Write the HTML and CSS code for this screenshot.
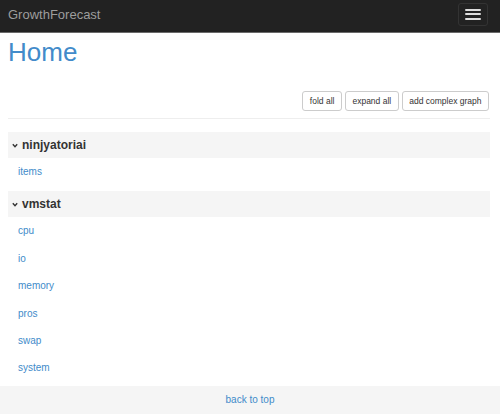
FILE: index.html
```html
<!DOCTYPE html>
<html lang="en">
<head>
  <meta charset="UTF-8">
  <title>GrowthForecast</title>
  <link rel="stylesheet" href="styles.css">
</head>
<body>

  <div class="navbar">
    <a class="brand" href="#">GrowthForecast</a>
    <button class="toggle">
      <span class="bar"></span>
      <span class="bar"></span>
      <span class="bar"></span>
    </button>
  </div>

  <div class="container">
    <h1>Home</h1>

    <div class="actions">
      <button class="btn">fold all</button>
      <button class="btn">expand all</button>
      <button class="btn">add complex graph</button>
    </div>
    <hr>

    <div class="service first">
      <div class="service-head">
        <svg class="chev" width="6" height="5" viewBox="0 0 6 5"><path d="M0.8 1.2 L3 3.6 L5.2 1.2" fill="none" stroke="#333" stroke-width="1.4"/></svg>
        ninjyatoriai
      </div>
      <ul class="sections">
        <li><a href="#">items</a></li>
      </ul>
    </div>

    <div class="service">
      <div class="service-head">
        <svg class="chev" width="6" height="5" viewBox="0 0 6 5"><path d="M0.8 1.2 L3 3.6 L5.2 1.2" fill="none" stroke="#333" stroke-width="1.4"/></svg>
        vmstat
      </div>
      <ul class="sections">
        <li><a href="#">cpu</a></li>
        <li><a href="#">io</a></li>
        <li><a href="#">memory</a></li>
        <li><a href="#">pros</a></li>
        <li><a href="#">swap</a></li>
        <li><a href="#">system</a></li>
      </ul>
    </div>
  </div>

  <div class="footer">
    <a href="#">back to top</a>
  </div>

</body>
</html>
```

FILE: styles.css
```css
body {
  margin: 0;
  padding: 0;
  font-family: "Liberation Sans", Arial, sans-serif;
  color: #333;
  background: #fff;
  overflow: hidden;
}

a {
  color: #428bca;
  text-decoration: none;
}

.navbar {
  height: 32px;
  background: #222;
  border-bottom: 1px solid #6a6a6a;
  display: flex;
  align-items: center;
  justify-content: space-between;
  padding: 0 12px 0 8px;
}

.brand {
  color: #9d9d9d;
  font-size: 13px;
  margin-top: -4px;
}

.toggle {
  width: 30px;
  height: 23px;
  margin-top: -4px;
  background: transparent;
  border: 1px solid #333;
  border-radius: 3px;
  display: flex;
  flex-direction: column;
  align-items: center;
  justify-content: center;
  gap: 2.5px;
  padding: 0;
}

.toggle .bar {
  display: block;
  width: 16px;
  height: 2px;
  background: #ddd;
  border-radius: 1px;
}

.container {
  padding: 0 10px 0 8px;
}

h1 {
  margin: 5px 0 0;
  font-size: 26px;
  line-height: 28px;
  font-weight: normal;
  color: #428bca;
}

.actions {
  display: flex;
  justify-content: flex-end;
  gap: 3px;
  margin-top: 25px;
  padding-right: 1px;
}

.btn {
  box-sizing: border-box;
  height: 20px;
  padding: 0 6.5px;
  font-family: inherit;
  font-size: 8.5px;
  color: #333;
  background: #fff;
  border: 1px solid #ccc;
  border-radius: 3px;
}

hr {
  margin: 7px 0 0;
  border: 0;
  border-top: 1px solid #eee;
}

.service {
  margin-top: 6px;
}

.service.first {
  margin-top: 13px;
}

.service-head {
  height: 26px;
  background: #f5f5f5;
  display: flex;
  align-items: center;
  padding-left: 4px;
  gap: 4px;
  font-size: 12px;
  font-weight: bold;
}

.sections {
  list-style: none;
  margin: 0;
  padding: 0;
}

.sections li {
  height: 27.4px;
  line-height: 27.4px;
  padding-left: 10px;
  font-size: 10px;
}

.footer {
  margin-top: 4px;
  height: 28px;
  background: #f5f5f5;
  border-bottom: 2px solid #c8c8c8;
  text-align: center;
  line-height: 28px;
  font-size: 10px;
}
```
